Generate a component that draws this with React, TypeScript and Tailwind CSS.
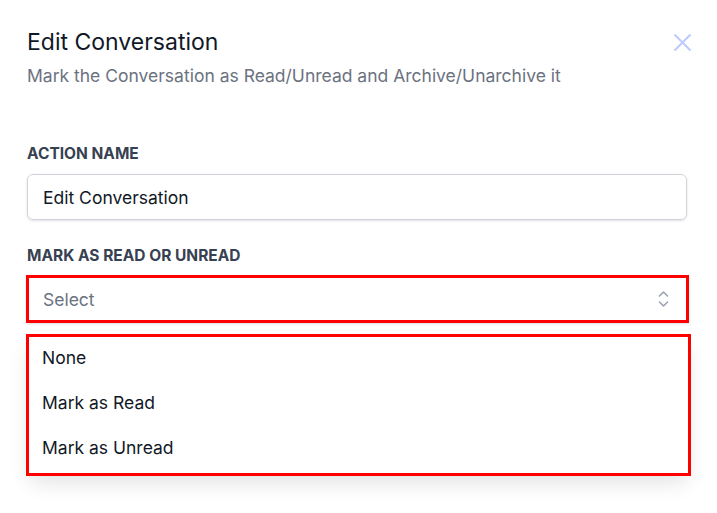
const OPTIONS = ["None", "Mark as Read", "Mark as Unread"];

export default function App() {
  return (
    <div className="relative h-[513px] w-[717px] overflow-hidden bg-white font-['Inter',sans-serif]">
      <div className="flex items-start justify-between pl-[27px] pr-[25px] pt-[27px]">
        <div>
          <h2 className="text-[23px] leading-[30px] text-[#111827]">Edit Conversation</h2>
          <p className="mt-[7px] text-[17.5px] leading-6 text-[#6b7280]">
            Mark the Conversation as Read/Unread and Archive/Unarchive it
          </p>
        </div>
        <button type="button" className="mt-[6px] text-[#bfcafc]">
          <svg width="19" height="19" viewBox="0 0 19 19" fill="none" stroke="currentColor" strokeWidth="2" aria-hidden="true">
            <path d="M1.5 1.5l16 16M17.5 1.5l-16 16" />
          </svg>
        </button>
      </div>

      <div className="px-[27px] pr-[30px] pt-[56px]">
        <label className="block text-[15.5px] font-bold leading-5 text-[#374151]">ACTION NAME</label>
        <div className="mt-[10px] flex h-[46px] items-center rounded-md border border-[#d1d5db] px-[15px] pt-[2px] text-[17.5px] text-[#111827] shadow-sm">
          Edit Conversation
        </div>

        <label className="mt-[26px] block text-[15.5px] font-bold leading-5 text-[#374151]">
          MARK AS READ OR UNREAD
        </label>
        <div className="-ml-px -mr-[2px] mt-[9px] flex h-[48px] items-center justify-between border-[3px] border-[#ff0000] pl-[14px] pr-[17px] pt-[3px] text-[17.5px] text-[#6b7280] shadow-sm">
          <span>Select</span>
          <svg width="11" height="18" viewBox="0 0 11 18" fill="none" stroke="#9ca3af" strokeWidth="1.6" strokeLinecap="round" strokeLinejoin="round" aria-hidden="true" className="-mt-[3px]">
            <path d="M1.5 6l4-4 4 4M1.5 12l4 4 4-4" />
          </svg>
        </div>

        <ul className="-ml-px -mr-[4px] mt-[11px] flex flex-col gap-[7px] border-[3px] border-[#ff0000] bg-white pb-[6px] pt-[2px] shadow-[0_10px_20px_-4px_rgba(0,0,0,0.12)]">
          {OPTIONS.map((o) => (
            <li key={o} className="flex h-[38px] items-center pl-[13px] text-[17.5px] text-[#111827]">
              {o}
            </li>
          ))}
        </ul>
      </div>
    </div>
  );
}
